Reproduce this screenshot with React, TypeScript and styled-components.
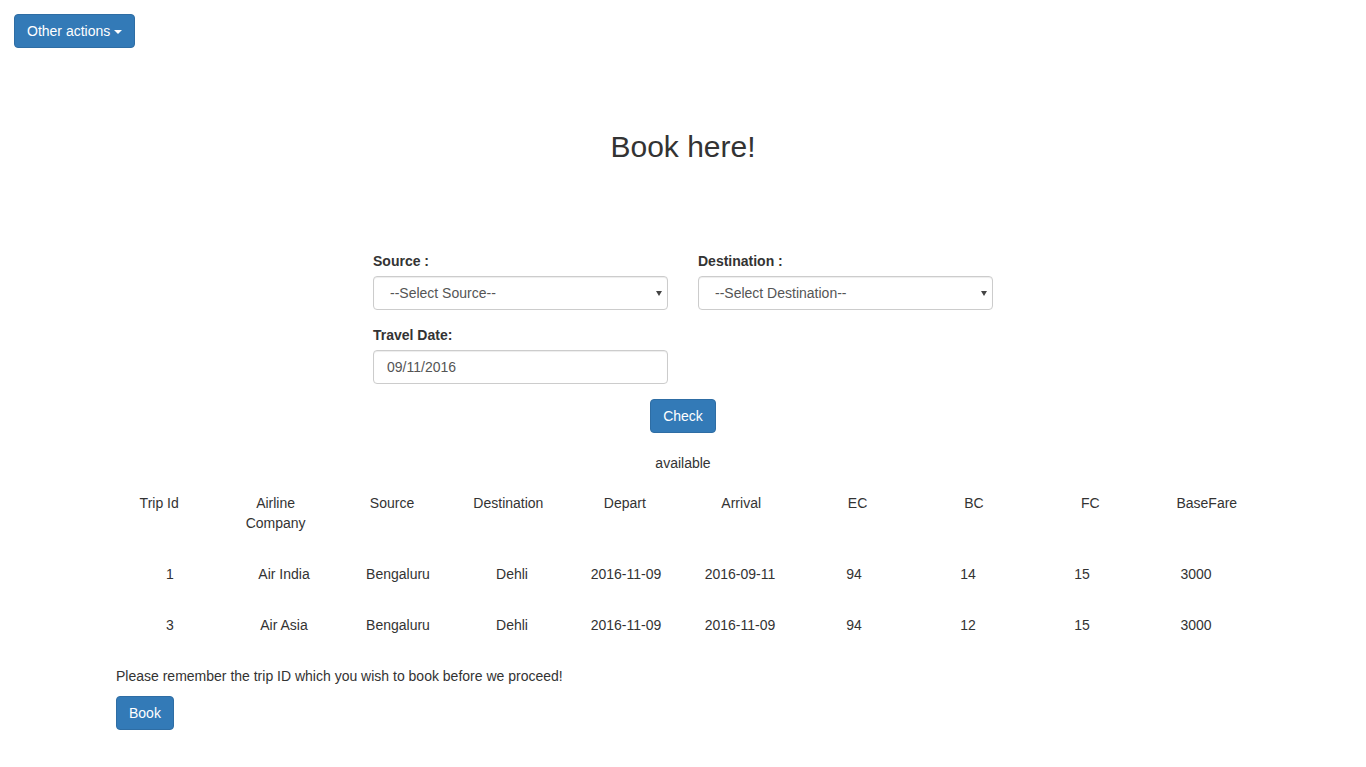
import React, { useState } from 'react';
import styled, { createGlobalStyle } from 'styled-components';

interface ITrip {
  id: number;
  airline: string;
  source: string;
  destination: string;
  depart: string;
  arrival: string;
  ec: number;
  bc: number;
  fc: number;
  baseFare: number;
}

const trips: ITrip[] = [
  { id: 1, airline: 'Air India', source: 'Bengaluru', destination: 'Dehli', depart: '2016-11-09', arrival: '2016-09-11', ec: 94, bc: 14, fc: 15, baseFare: 3000 },
  { id: 3, airline: 'Air Asia', source: 'Bengaluru', destination: 'Dehli', depart: '2016-11-09', arrival: '2016-11-09', ec: 94, bc: 12, fc: 15, baseFare: 3000 },
];

const headers = ['Trip Id', 'Airline Company', 'Source', 'Destination', 'Depart', 'Arrival', 'EC', 'BC', 'FC', 'BaseFare'];

const GlobalStyle = createGlobalStyle`
  body {
    margin: 0;
    font-family: "Liberation Sans", Arial, Helvetica, sans-serif;
    font-size: 14px;
    line-height: 1.42857143;
    color: #333;
    background: #fff;
  }
  * {
    box-sizing: border-box;
  }
`;

const App = () => {
  const [source, setSource] = useState('');
  const [destination, setDestination] = useState('');
  const [date, setDate] = useState('09/11/2016');

  return (
    <>
      <GlobalStyle />
      <TopBar>
        <Button type="button">
          Other actions <Caret />
        </Button>
      </TopBar>

      <Heading>Book here!</Heading>

      <Form onSubmit={(e) => e.preventDefault()}>
        <FormGroup>
          <Label htmlFor="source">Source :</Label>
          <SelectWrap>
            <SelectBox id="source" value={source} onChange={(e) => setSource(e.target.value)}>
              <option value="">--Select Source--</option>
              <option value="Bengaluru">Bengaluru</option>
            </SelectBox>
            <SelectArrow />
          </SelectWrap>
        </FormGroup>
        <FormGroup>
          <Label htmlFor="destination">Destination :</Label>
          <SelectWrap>
            <SelectBox id="destination" value={destination} onChange={(e) => setDestination(e.target.value)}>
              <option value="">--Select Destination--</option>
              <option value="Dehli">Dehli</option>
            </SelectBox>
            <SelectArrow />
          </SelectWrap>
        </FormGroup>
        <FormGroup>
          <Label htmlFor="date">Travel Date:</Label>
          <Input id="date" type="text" value={date} onChange={(e) => setDate(e.target.value)} />
        </FormGroup>
      </Form>

      <Center>
        <Button type="button">Check</Button>
      </Center>

      <Status>available</Status>

      <HeaderRow>
        {headers.map((h) => (
          <HeadCell key={h}>{h}</HeadCell>
        ))}
      </HeaderRow>

      <Rows>
        {trips.map((t) => (
          <DataRow key={t.id}>
            <Cell>{t.id}</Cell>
            <Cell>{t.airline}</Cell>
            <Cell>{t.source}</Cell>
            <Cell>{t.destination}</Cell>
            <Cell>{t.depart}</Cell>
            <Cell>{t.arrival}</Cell>
            <Cell>{t.ec}</Cell>
            <Cell>{t.bc}</Cell>
            <Cell>{t.fc}</Cell>
            <Cell>{t.baseFare}</Cell>
          </DataRow>
        ))}
      </Rows>

      <Footer>
        <Note>Please remember the trip ID which you wish to book before we proceed!</Note>
        <Button type="button">Book</Button>
      </Footer>
    </>
  );
};

const TopBar = styled.div`
  padding: 14px 14px 0;
`;

const Button = styled.button`
  display: inline-block;
  padding: 6px 12px;
  font-family: inherit;
  font-size: 14px;
  line-height: 1.42857143;
  color: #fff;
  background-color: #337ab7;
  border: 1px solid #2e6da4;
  border-radius: 4px;
  cursor: pointer;
  white-space: nowrap;
  vertical-align: middle;
`;

const Caret = styled.span`
  display: inline-block;
  width: 0;
  height: 0;
  vertical-align: middle;
  border-top: 4px solid #fff;
  border-right: 4px solid transparent;
  border-left: 4px solid transparent;
`;

const Heading = styled.h2`
  margin: 82px 0 0;
  text-align: center;
  font-size: 30px;
  font-weight: 500;
  line-height: 1.1;
  color: #333;
`;

const Form = styled.form`
  width: 620px;
  margin: 88px auto 0;
  display: grid;
  grid-template-columns: 295px 295px;
  column-gap: 30px;
`;

const FormGroup = styled.div`
  margin-bottom: 15px;
`;

const Label = styled.label`
  display: inline-block;
  margin-bottom: 5px;
  font-weight: 700;
`;

const fieldStyle = `
  display: block;
  width: 100%;
  height: 34px;
  padding: 6px 12px;
  font-family: inherit;
  font-size: 14px;
  line-height: 1.42857143;
  color: #555;
  background-color: #fff;
  border: 1px solid #ccc;
  border-radius: 4px;
  box-shadow: inset 0 1px 1px rgba(0, 0, 0, 0.075);
`;

const SelectWrap = styled.div`
  position: relative;
`;

const SelectBox = styled.select`
  ${fieldStyle}
  appearance: none;
  -webkit-appearance: none;
  padding-left: 16px;
  padding-right: 24px;
`;

const SelectArrow = styled.span`
  position: absolute;
  right: 6px;
  top: 15px;
  width: 0;
  height: 0;
  border-top: 5px solid #444;
  border-left: 3.5px solid transparent;
  border-right: 3.5px solid transparent;
  pointer-events: none;
`;

const Input = styled.input`
  ${fieldStyle}
  padding-left: 13px;
`;

const Center = styled.div`
  text-align: center;
`;

const Status = styled.div`
  margin-top: 20px;
  text-align: center;
`;

const HeaderRow = styled.div`
  width: 1164px;
  margin: 20px auto 0;
  display: grid;
  grid-template-columns: repeat(10, 1fr);
`;

const HeadCell = styled.div`
  padding: 0 10px;
  text-align: center;
`;

const Rows = styled.div`
  width: 1140px;
  margin: 16px auto 0;
`;

const DataRow = styled.div`
  display: grid;
  grid-template-columns: repeat(10, 1fr);
  padding: 15px 0 16px;
`;

const Cell = styled.div`
  text-align: center;
`;

const Footer = styled.div`
  width: 1134px;
  margin: 15px auto 0;
  padding-bottom: 37px;
`;

const Note = styled.p`
  margin: 0 0 10px;
`;

export default App;
